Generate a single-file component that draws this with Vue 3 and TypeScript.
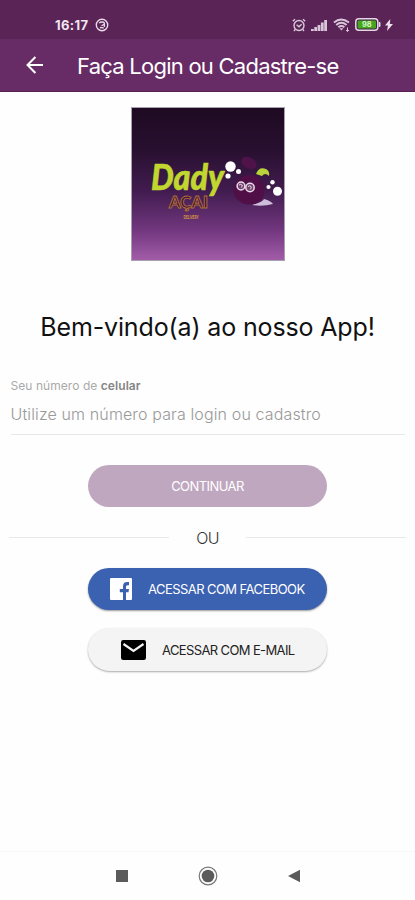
<script setup lang="ts">
import { ref } from 'vue'

const phone = ref('')
const bars: number[] = [2, 4, 6, 8.5, 11]
</script>

<template>
  <main class="screen">
    <div class="status">
      <div class="status-left">
        <span class="clock">16:17</span>
        <svg class="badge-icon" viewBox="0 0 14 14" fill="none" stroke="#e9dcea">
          <circle cx="7" cy="7" r="5.7" stroke-width="1.4" />
          <path d="M4.3 5.2C5.5 3.5 9.5 3.5 9.4 5.8C9.3 7.4 6.8 6.3 6.8 8M5 9.5l3.8.4M9.4 6v3" stroke-width="1.3" />
        </svg>
      </div>
      <div class="status-right">
        <svg class="alarm" viewBox="0 0 14 14" fill="none" stroke="#d9c6da" stroke-width="1.4">
          <circle cx="7" cy="7.5" r="5" />
          <path d="M.8 3.2L3 1.2M13.2 3.2L11 1.2M4.6 6.7L7 8.8L9.6 6.3M3.2 11.5L2 13M10.8 11.5L12 13" />
        </svg>
        <svg class="signal" viewBox="0 0 16 12" fill="#d9c6da">
          <rect v-for="(h, i) in bars" :key="i" :x="i * 3.3" :y="12 - h" width="2.8" :height="h" />
        </svg>
        <svg class="wifi" viewBox="0 0 18 14" fill="none" stroke="#d9c6da" stroke-width="1.9">
          <path d="M1 4.5Q8 -1.7 16 4.5M3.2 7Q8.4 2.7 13.6 7M5.4 9.2Q8.4 6.8 11.4 9.2" />
          <path d="M6.4 10.2h4L8.4 12.5z" fill="#d9c6da" stroke="none" />
          <path d="M14.5 9.5v4M13 12l1.5 1.5L16 12" stroke-width="1" />
        </svg>
        <svg class="battery" viewBox="0 0 26 13">
          <rect x=".8" y=".8" width="22" height="11.4" rx="3" fill="#432049" stroke="#e4d6e5" stroke-width="1.5" />
          <rect x="2.6" y="2.6" width="18.4" height="7.8" rx="1.2" fill="#46a51d" />
          <path d="M23.8 4h.7q1 0 1 1v3q0 1-1 1h-.7z" fill="#e4d6e5" />
          <text x="11.8" y="9.3" text-anchor="middle">98</text>
        </svg>
        <svg class="bolt" viewBox="0 0 8 12" fill="#eee2ef"><path d="M5.3 0L0 6.6h3L2 12L8 5H4.8z" /></svg>
      </div>
    </div>
    <header class="appbar">
      <svg class="back" viewBox="0 0 18 18" fill="none" stroke="#fff" stroke-width="2">
        <path d="M9.4 1L1.5 9l7.9 8M1.8 9H17" />
      </svg>
      <h1>Faça Login ou Cadastre-se</h1>
    </header>
    <section class="content">
      <svg class="logo" viewBox="0 0 154 154">
        <defs>
          <linearGradient id="night" x1="0" y1="0" x2="0" y2="1">
            <stop offset="0" stop-color="#1e0a22" />
            <stop offset=".28" stop-color="#281030" />
            <stop offset=".55" stop-color="#421c50" />
            <stop offset=".8" stop-color="#71377e" />
            <stop offset="1" stop-color="#a35da9" />
          </linearGradient>
        </defs>
        <rect x=".5" y=".5" width="153" height="153" fill="url(#night)" stroke="#a89fac" />
        <text class="dady" x="20" y="82.5" textLength="73" lengthAdjust="spacingAndGlyphs">Dady</text>
        <text class="acai" x="38" y="101" textLength="39" lengthAdjust="spacingAndGlyphs">AÇAI</text>
        <text class="sub" x="52.5" y="111.5" textLength="15" lengthAdjust="spacingAndGlyphs">DELIVERY</text>
        <ellipse cx="118" cy="56" rx="8" ry="5.5" fill="#4f1349" transform="rotate(25 118 56)" />
        <ellipse cx="118" cy="83" rx="15.5" ry="14.5" fill="#500f47" />
        <path d="M109 72Q119 64 129 72L133 85Q132 96 121 98z" fill="#500f47" />
        <path d="M125 67Q128 59 135 62Q139 64 138 69Q134 65 131 69Z" fill="#b8d43a" />
        <path d="M121 98Q132 95 133 92Q140 94 142 97Q131 100 121 98Z" fill="#cdbfda" />
        <g fill="#fff">
          <circle cx="99.5" cy="59.5" r="5.2" />
          <circle cx="107.5" cy="64.5" r="2.5" />
          <circle cx="97" cy="69" r="2.6" />
          <circle cx="141.5" cy="75.3" r="2.2" />
          <circle cx="137.5" cy="80" r="2.1" />
          <circle cx="146.5" cy="84.3" r="4.5" />
        </g>
        <g fill="#75456f" stroke="#e8dbea" stroke-width="1.5">
          <circle cx="110" cy="79" r="3.9" />
          <circle cx="119" cy="80.5" r="4.2" />
          <path d="M108 78q2-1.5 3 0t-1 2.5M117 79.5q2-1.5 3 0t-1 3" fill="none" stroke-width="1" />
        </g>
      </svg>
      <h2>Bem-vindo(a) ao nosso App!</h2>
      <label class="field">
        <span class="caption">Seu número de <b>celular</b></span>
        <input v-model="phone" type="tel" placeholder="Utilize um número para login ou cadastro" />
      </label>
      <button class="btn primary"><span>CONTINUAR</span></button>
      <div class="divider"><i></i><span>OU</span><i></i></div>
      <button class="btn facebook">
        <svg viewBox="0 0 22 22">
          <rect width="22" height="22" rx="1" fill="#fff" />
          <path d="M13 22v-7.8H9.8V11H13V8.4q0-4.4 4.2-4.4H19v3.2h-1.5q-1.5 0-1.5 1.6V11h3l-.5 3.2H16V22z" fill="#3b61b1" />
        </svg>
        <span>ACESSAR COM FACEBOOK</span>
      </button>
      <button class="btn email">
        <svg viewBox="0 0 25 20">
          <rect width="25" height="20" rx="2.2" fill="#000" />
          <path d="M2.5 4L12.5 10.8L22.5 4" fill="none" stroke="#f4f4f4" stroke-width="2.2" />
        </svg>
        <span>ACESSAR COM E-MAIL</span>
      </button>
    </section>
    <nav class="navbar">
      <svg viewBox="0 0 14 14"><rect x="1" y="1" width="12" height="12" fill="#5b5b5b" /></svg>
      <svg class="home" viewBox="0 0 20 20">
        <circle cx="10" cy="10" r="8.8" fill="none" stroke="#777" stroke-width="1.2" />
        <circle cx="10" cy="10" r="6.3" fill="#5b5b5b" />
      </svg>
      <svg viewBox="0 0 14 14"><path d="M13 .7v12.6L1 7z" fill="#5b5b5b" /></svg>
    </nav>
  </main>
</template>

<style>
body { margin: 0; background: #fefefe; }
</style>

<style scoped>
.screen { width: 415px; height: 900px; display: flex; flex-direction: column; background: #fefefe; font-family: Inter, "Noto Sans", sans-serif; color: #111; overflow: hidden; }
.screen * { box-sizing: border-box; }
svg { display: block; flex: none; }
.status { height: 39px; flex: none; background: #5a2556; display: flex; justify-content: space-between; align-items: center; padding: 10px 22px 0 55px; }
.status-left { display: flex; align-items: center; gap: 6px; }
.clock { width: 34px; white-space: nowrap; font-size: 13px; font-weight: 700; letter-spacing: .35px; color: #f0e5f1; }
.badge-icon { width: 14px; height: 14px; }
.status-right { display: flex; align-items: center; }
.alarm { width: 14px; height: 14px; margin-right: 5px; }
.signal { width: 16px; height: 12px; margin-right: 6px; }
.wifi { width: 18px; height: 14px; margin-right: 4px; }
.battery { width: 26px; height: 13px; margin-right: 4px; }
.battery text { font-size: 7.5px; font-weight: 700; fill: #d7f5ca; }
.bolt { width: 8px; height: 12px; }
.appbar { height: 53px; flex: none; background: #672b65; border-bottom: 1px solid #572154; display: flex; align-items: center; padding-left: 26px; gap: 33px; }
.back { width: 18px; height: 18px; }
h1 { margin: 2px 0 0; font-size: 22px; line-height: 30px; font-weight: 400; letter-spacing: -.76px; color: #fff; white-space: nowrap; }
.content { flex: 1; display: flex; flex-direction: column; align-items: center; padding: 15px 9px 0; }
.logo { width: 154px; height: 154px; }
.dady { font: italic 900 36px Lato, sans-serif; fill: #c1d72f; stroke: #c1d72f; stroke-width: .6; stroke-linejoin: round; }
.acai { font: 900 16px Lato, sans-serif; fill: #401239; stroke: #b0703a; stroke-width: .9; }
.sub { font: 900 5px Lato, sans-serif; fill: #d79a40; }
h2 { margin: 48px 0 0; font-size: 25px; line-height: 36px; font-weight: 400; letter-spacing: -.14px; white-space: nowrap; }
.field { width: 100%; height: 75px; margin-top: 33px; padding: 0 1.5px; display: flex; flex-direction: column; }
.caption { font-size: 12px; line-height: 16px; letter-spacing: .06px; color: #aaa; white-space: nowrap; }
.caption b { font-weight: 600; color: #858585; }
input { width: 100%; height: 41px; border: 0; border-bottom: 1px solid #e8e8e8; background: transparent; padding: 0; outline: none; font: 300 16px Inter, sans-serif; letter-spacing: .13px; }
input::placeholder { color: #999; opacity: 1; }
.btn { width: 239px; height: 42px; flex: none; border: 0; border-radius: 22px; display: flex; align-items: center; font: 400 13px Inter, sans-serif; letter-spacing: -.56px; white-space: nowrap; padding: 0; }
.primary { justify-content: center; margin-top: 12px; background: #c0a7c0; color: #fff; }
.divider { width: 100%; height: 61px; display: flex; align-items: center; justify-content: space-between; font-size: 16px; font-weight: 300; letter-spacing: -.7px; color: #333; }
.divider i { width: 160px; height: 1px; background: #e9e9e9; }
.facebook { padding-left: 22px; gap: 16px; background: #3b61b1; color: #fff; box-shadow: 0 1px 2px #0006; }
.facebook svg { width: 22px; height: 22px; }
.email { height: 43px; margin-top: 18px; padding-left: 33px; gap: 16px; background: #f4f4f4; color: #222; box-shadow: 0 1px 2px #0005; }
.email span { letter-spacing: -.62px; }
.email svg { width: 25px; height: 20px; }
.navbar { height: 49px; flex: none; border-top: 1px solid #f7f7f7; display: flex; align-items: center; justify-content: center; gap: 69px; }
.navbar svg { width: 14px; height: 14px; }
.navbar .home { width: 20px; height: 20px; }
</style>
